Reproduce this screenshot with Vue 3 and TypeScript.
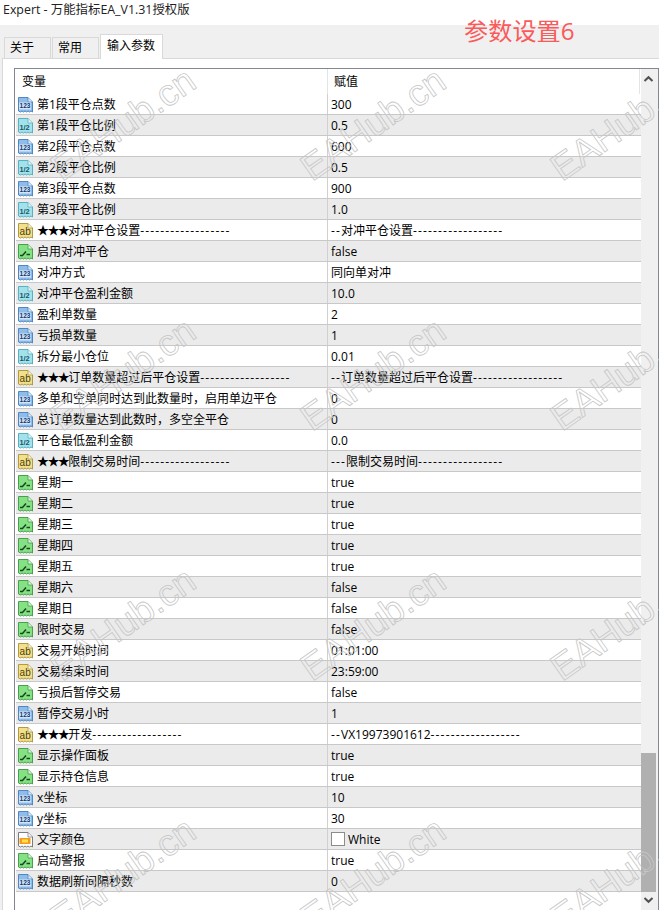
<script setup lang="ts">
type Kind = 'int' | 'dbl' | 'str' | 'bool' | 'color'
interface Row { k: Kind; n: string; v: string }

const D18 = '-'.repeat(18)

const rows: Row[] = [
  { k: 'int', n: '第1段平仓点数', v: '300' },
  { k: 'dbl', n: '第1段平仓比例', v: '0.5' },
  { k: 'int', n: '第2段平仓点数', v: '600' },
  { k: 'dbl', n: '第2段平仓比例', v: '0.5' },
  { k: 'int', n: '第3段平仓点数', v: '900' },
  { k: 'dbl', n: '第3段平仓比例', v: '1.0' },
  { k: 'str', n: '★★★对冲平仓设置' + D18, v: '--对冲平仓设置' + D18 },
  { k: 'bool', n: '启用对冲平仓', v: 'false' },
  { k: 'int', n: '对冲方式', v: '同向单对冲' },
  { k: 'dbl', n: '对冲平仓盈利金额', v: '10.0' },
  { k: 'int', n: '盈利单数量', v: '2' },
  { k: 'int', n: '亏损单数量', v: '1' },
  { k: 'dbl', n: '拆分最小仓位', v: '0.01' },
  { k: 'str', n: '★★★订单数量超过后平仓设置' + D18, v: '--订单数量超过后平仓设置' + D18 },
  { k: 'int', n: '多单和空单同时达到此数量时，启用单边平仓', v: '0' },
  { k: 'int', n: '总订单数量达到此数时，多空全平仓', v: '0' },
  { k: 'dbl', n: '平仓最低盈利金额', v: '0.0' },
  { k: 'str', n: '★★★限制交易时间' + D18, v: '---限制交易时间-----------------' },
  { k: 'bool', n: '星期一', v: 'true' },
  { k: 'bool', n: '星期二', v: 'true' },
  { k: 'bool', n: '星期三', v: 'true' },
  { k: 'bool', n: '星期四', v: 'true' },
  { k: 'bool', n: '星期五', v: 'true' },
  { k: 'bool', n: '星期六', v: 'false' },
  { k: 'bool', n: '星期日', v: 'false' },
  { k: 'bool', n: '限时交易', v: 'false' },
  { k: 'str', n: '交易开始时间', v: '01:01:00' },
  { k: 'str', n: '交易结束时间', v: '23:59:00' },
  { k: 'bool', n: '亏损后暂停交易', v: 'false' },
  { k: 'int', n: '暂停交易小时', v: '1' },
  { k: 'str', n: '★★★开发' + D18, v: '--VX19973901612' + D18 },
  { k: 'bool', n: '显示操作面板', v: 'true' },
  { k: 'bool', n: '显示持仓信息', v: 'true' },
  { k: 'int', n: 'x坐标', v: '10' },
  { k: 'int', n: 'y坐标', v: '30' },
  { k: 'color', n: '文字颜色', v: 'White' },
  { k: 'bool', n: '启动警报', v: 'true' },
  { k: 'int', n: '数据刷新间隔秒数', v: '0' }
]

function parts(s: string): { t: string; c: string }[] {
  return s
    .split(/(★+|-+)/)
    .filter((t) => t.length > 0)
    .map((t) => ({ t, c: t[0] === '★' ? 'stars' : t[0] === '-' ? 'dashes' : '' }))
}

const marks: [number, number][] = []
for (const y of [124, 374, 624, 874]) {
  for (const x of [123, 373, 623]) marks.push([x, y])
}

const docPath = 'M1.5 .5H11L15.5 5V15L14 14L12.5 15L11 14L9.5 15L8 14L6.5 15L5 14L3.5 15L1.5 14Z'
const fills: Record<Kind, string> = {
  int: '#8fbce8',
  dbl: '#a4e2ea',
  str: '#f2e08c',
  bool: '#86e084',
  color: '#ffffff'
}
const strokes: Record<Kind, string> = {
  int: '#4f87c4',
  dbl: '#58b0c4',
  str: '#b09a42',
  bool: '#46a04c',
  color: '#7c7c7c'
}
</script>

<template>
  <div class="win">
    <div class="title">Expert - 万能指标EA_V1.31授权版</div>
    <div class="tabs">
      <div class="tab">关于</div>
      <div class="tab">常用</div>
      <div class="tab active">输入参数</div>
    </div>
    <div class="panel">
      <div class="list">
        <div class="content">
          <div class="head">
            <div class="hn">变量</div>
            <div class="hv">赋值</div>
          </div>
          <div v-for="(r, i) in rows" :key="i" class="row" :class="{ alt: i % 2 === 1 }">
            <div class="cn">
              <svg class="ic" width="16" height="16" viewBox="0 0 16 16">
                <path :d="docPath" :fill="fills[r.k]" :stroke="strokes[r.k]" stroke-width="1" />
                <path d="M11 .5V5H15.5" fill="#ffffff" fill-opacity=".7" :stroke="strokes[r.k]" stroke-width=".8" />
                <template v-if="r.k === 'int'">
                  <rect x="2" y="5.5" width="12" height="7" fill="#d2e5f7" />
                  <text x="8" y="11.4" class="t123">123</text>
                </template>
                <text v-else-if="r.k === 'dbl'" x="2.4" y="11.8" class="t12">1/2</text>
                <text v-else-if="r.k === 'str'" x="2.6" y="12" class="tab-ic">ab</text>
                <path v-else-if="r.k === 'bool'" d="M3 11.5H5.5L9 7.5M9.5 10.5H13" fill="none" stroke="#14491f" stroke-width="1.5" />
                <template v-else>
                  <rect x="2.5" y="6" width="11" height="6" fill="#f39a1c" />
                  <rect x="5" y="7.5" width="6" height="3" fill="#ffe24a" />
                </template>
              </svg>
              <span class="nm"><span v-for="(p, j) in parts(r.n)" :key="j" :class="p.c">{{ p.t }}</span></span>
            </div>
            <div class="cv">
              <span v-if="r.k === 'color'" class="swatch"></span>
              <span class="vl"><span v-for="(p, j) in parts(r.v)" :key="j" :class="p.c">{{ p.t }}</span></span>
            </div>
          </div>
        </div>
        <div class="sb">
          <svg class="arr" width="15" height="14" viewBox="0 0 15 14"><path d="M3.5 9L7.5 5.2L11.5 9" fill="none" stroke="#505050" stroke-width="2" /></svg>
          <div class="track"><div class="thumb"></div></div>
          <svg class="arr down" width="15" height="14" viewBox="0 0 15 14"><path d="M3.5 5L7.5 8.8L11.5 5" fill="none" stroke="#505050" stroke-width="2" /></svg>
        </div>
      </div>
    </div>
    <div class="note">参数设置6</div>
    <div
      v-for="(m, i) in marks"
      :key="'m' + i"
      class="mark"
      :style="{ left: m[0] + 'px', top: m[1] + 'px' }"
    >EAHub.cn</div>
  </div>
</template>

<style>
html, body { margin: 0; background: #fff; }
</style>

<style scoped>
.win {
  position: relative;
  width: 659px;
  height: 910px;
  overflow: hidden;
  background: #f0f0f0;
  font-family: "Open Sans", "Noto Sans CJK SC", sans-serif;
  font-size: 12px;
  color: #000;
  display: flex;
  flex-direction: column;
}
.title {
  height: 25px;
  flex: none;
  background: #fff;
  padding-left: 3px;
  font-size: 12.4px;
  line-height: 20px;
  color: #222;
  box-sizing: border-box;
}
.tabs {
  height: 33px;
  flex: none;
  display: flex;
  align-items: flex-end;
  padding-left: 4px;
  gap: 1px;
  box-sizing: border-box;
}
.tab {
  width: 47px;
  height: 21px;
  box-sizing: border-box;
  border: 1px solid #d9d9d9;
  border-bottom: 0;
  padding-left: 5px;
  line-height: 20px;
  font-size: 12px;
  background: #f0f0f0;
}
.tab.active {
  width: 63px;
  height: 25px;
  margin-bottom: -1px;
  padding-left: 6px;
  background: #fff;
  line-height: 22px;
  position: relative;
  z-index: 1;
}
.panel {
  flex: 1;
  min-height: 0;
  margin-left: 2px;
  background: #fff;
  border-top: 1px solid #d9d9d9;
  border-left: 1px solid #d9d9d9;
  padding: 9px 0 0 11px;
  box-sizing: border-box;
}
.list {
  height: 100%;
  box-sizing: content-box;
  border: 1px solid #828790;
  border-bottom: 0;
  display: flex;
  background: #fff;
}
.content { width: 626px; flex: none; padding-left: 1px; box-sizing: border-box; }
.head {
  height: 25px;
  display: flex;
  line-height: 26px;
  border-right: 1px solid #e4e4e4;
  box-sizing: border-box;
  width: 624px;
}
.hn { width: 312px; flex: none; padding-left: 6px; box-sizing: border-box; border-right: 1px solid #e4e4e4; }
.hv { padding-left: 6px; }
.row {
  height: 21px;
  display: flex;
  box-sizing: border-box;
  border-bottom: 1px solid #c8c8c8;
}
.row.alt { background: #ebebeb; }
.cn {
  width: 312px;
  flex: none;
  display: flex;
  align-items: center;
  padding-left: 1px;
  box-sizing: border-box;
  border-right: 1px solid #d0d0d0;
  white-space: nowrap;
  overflow: hidden;
}
.ic { flex: none; margin: 1px 4px 0 0; }
.nm { line-height: 20px; margin-top: 2px; }
.cv {
  padding-left: 3px;
  white-space: nowrap;
  display: flex;
  align-items: center;
}
.vl { line-height: 20px; margin-top: 2px; }
.stars { letter-spacing: -1.6px; }
.dashes { letter-spacing: 1.15px; }
.swatch {
  width: 12px;
  height: 12px;
  background: #fff;
  border: 1px solid #8c8c8c;
  margin-right: 3px;
  flex: none;
}
.sb {
  width: 17px;
  flex: none;
  display: flex;
  flex-direction: column;
  background: #f0f0f0;
  height: 100%;
}
.arr { flex: none; display: block; margin-top: 3px; }
.arr.down { margin-top: 1px; }
.track {
  height: 806px;
  flex: none;
  display: flex;
  flex-direction: column;
  justify-content: flex-end;
}
.thumb { width: 15px; height: 139px; background: #b0b0b0; }
.note {
  position: absolute;
  left: 464px;
  top: 13px;
  font-size: 24.2px;
  line-height: 36px;
  color: #fa5a5a;
}
.mark {
  position: absolute;
  transform: translate(-50%, -50%) rotate(-35deg);
  font-family: "Liberation Sans", sans-serif;
  font-size: 37px;
  line-height: 1;
  color: transparent;
  -webkit-text-stroke: 0.8px #c6c6c6;
  white-space: nowrap;
  pointer-events: none;
}
.t123 { font: 700 6.6px "Liberation Sans", sans-serif; fill: #123a70; text-anchor: middle; }
.t12 { font: 700 7.4px "Liberation Sans", sans-serif; fill: #14566a; }
.tab-ic { font: 400 10px "Liberation Sans", sans-serif; fill: #4a3e08; }
</style>
